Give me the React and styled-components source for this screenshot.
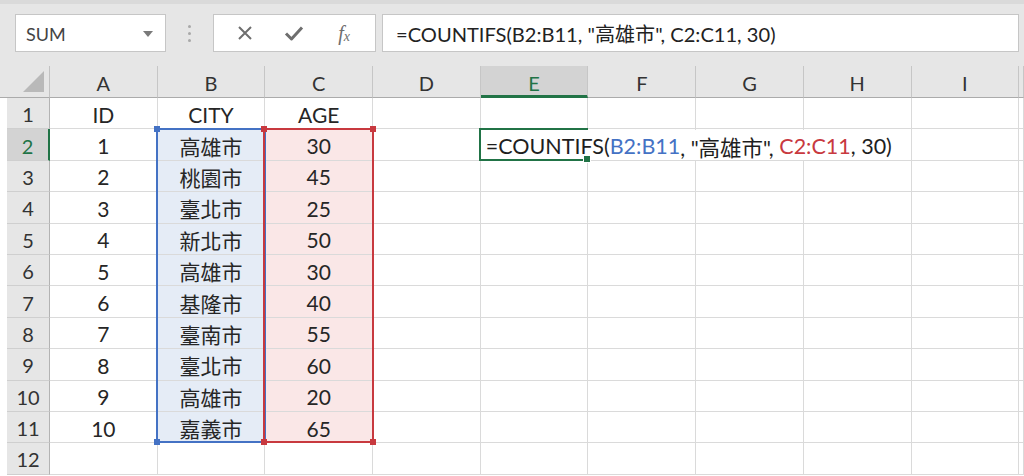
import React from "react";
import styled, { createGlobalStyle } from "styled-components";

const COLS = ["A", "B", "C", "D", "E", "F", "G", "H", "I"];
const ROW_COUNT = 12;

const data = [
  ["ID", "CITY", "AGE"],
  ["1", "高雄市", "30"],
  ["2", "桃園市", "45"],
  ["3", "臺北市", "25"],
  ["4", "新北市", "50"],
  ["5", "高雄市", "30"],
  ["6", "基隆市", "40"],
  ["7", "臺南市", "55"],
  ["8", "臺北市", "60"],
  ["9", "高雄市", "20"],
  ["10", "嘉義市", "65"],
];

const BLUE = "#4472c4";
const RED = "#c8393f";
const GREEN = "#217346";

function App() {
  const cells = [];
  for (let r = 1; r <= ROW_COUNT; r++) {
    for (let c = 0; c < COLS.length; c++) {
      const value = data[r - 1] && data[r - 1][c];
      let tint = null;
      if (r >= 2 && r <= 11 && c === 1) tint = "#e5ecf6";
      if (r >= 2 && r <= 11 && c === 2) tint = "#fae7e7";
      cells.push(
        <Cell key={r + "-" + c} $r={r + 1} $c={c + 2} $tint={tint}>
          {value}
        </Cell>
      );
    }
  }

  return (
    <Page>
      <GlobalStyle />
      <Toolbar>
        <NameBox>
          <span>SUM</span>
          <svg width="10" height="6" viewBox="0 0 10 6">
            <path d="M0 0 L10 0 L5 6 Z" fill="#7a7a7a" />
          </svg>
        </NameBox>
        <Grip>
          <i />
          <i />
          <i />
        </Grip>
        <FxBox>
          <FxButton>
            <svg width="16" height="16" viewBox="0 0 16 16">
              <path d="M2 2 L14 14 M14 2 L2 14" stroke="#6e6e6e" strokeWidth="2" fill="none" />
            </svg>
          </FxButton>
          <FxButton>
            <svg width="20" height="16" viewBox="0 0 20 16">
              <path d="M2 8.5 L7.5 14 L18 2.5" stroke="#6e6e6e" strokeWidth="3" fill="none" strokeLinejoin="round" />
            </svg>
          </FxButton>
          <FxButton>
            <FxGlyph>
              f<sub>x</sub>
            </FxGlyph>
          </FxButton>
        </FxBox>
        <Formula>=COUNTIFS(B2:B11, "高雄市", C2:C11, 30)</Formula>
      </Toolbar>

      <Sheet>
        <Corner>
          <svg width="21" height="21" viewBox="0 0 21 21">
            <path d="M21 0 L21 21 L0 21 Z" fill="#b9b9b9" />
          </svg>
        </Corner>
        {COLS.map((c, i) => (
          <ColHead key={c} $c={i + 2} $active={c === "E"}>
            {c}
          </ColHead>
        ))}
        <ColHead $c={11} />
        {Array.from({ length: ROW_COUNT }, (_, i) => (
          <RowHead key={i} $r={i + 2} $active={i === 1}>
            {i + 1}
          </RowHead>
        ))}
        {cells}
        {Array.from({ length: ROW_COUNT }, (_, i) => (
          <Cell key={"pad" + i} $r={i + 2} $c={11} />
        ))}

        <RangeBox $color={BLUE} $c={3}>
          <Handle $color={BLUE} $top $left />
          <Handle $color={BLUE} $left />
        </RangeBox>
        <RangeBox $color={RED} $c={4}>
          <Handle $color={RED} $top $left />
          <Handle $color={RED} $top />
          <Handle $color={RED} $left />
          <Handle $color={RED} />
        </RangeBox>

        <EditBox>
          =COUNTIFS(<Ref $color={BLUE}>B2:B11</Ref>, "高雄市", <Ref $color={RED}>C2:C11</Ref>, 30)
        </EditBox>
        <ActiveCell />
      </Sheet>
    </Page>
  );
}

const GlobalStyle = createGlobalStyle`
  html, body {
    margin: 0;
    padding: 0;
    background: #ffffff;
    overflow: hidden;
  }
  body {
    font-family: "Lato", "Noto Sans CJK TC", sans-serif;
  }
`;

const Page = styled.div`
  width: 1024px;
  height: 476px;
  overflow: hidden;
  background: #ffffff;
`;

const Toolbar = styled.div`
  height: 66px;
  box-sizing: border-box;
  border-top: 4px solid #dadada;
  background: #e6e6e6;
  padding: 10px 5px 0 15px;
  display: flex;
  align-items: flex-start;
  font-family: "Lato", "Noto Sans CJK TC", sans-serif;
`;

const NameBox = styled.div`
  width: 151px;
  height: 38px;
  box-sizing: border-box;
  background: #ffffff;
  border: 1px solid #c6c6c6;
  display: flex;
  align-items: center;
  justify-content: space-between;
  padding: 1px 12px 0 10px;
  font-size: 18px;
  color: #444444;
`;

const Grip = styled.div`
  width: 47px;
  height: 38px;
  display: flex;
  flex-direction: column;
  align-items: center;
  justify-content: center;
  gap: 4px;

  i {
    width: 3px;
    height: 3px;
    border-radius: 50%;
    background: #a9a9a9;
  }
`;

const FxBox = styled.div`
  width: 163px;
  height: 38px;
  box-sizing: border-box;
  background: #ffffff;
  border: 1px solid #c6c6c6;
  display: flex;
  align-items: center;
  justify-content: space-around;
  padding: 0 6px;
`;

const FxButton = styled.div`
  width: 40px;
  display: flex;
  align-items: center;
  justify-content: center;
`;

const FxGlyph = styled.span`
  font-family: "Liberation Serif", serif;
  font-style: italic;
  font-size: 20px;
  color: #6e6e6e;

  sub {
    font-size: 14px;
    vertical-align: -1px;
  }
`;

const Formula = styled.div`
  flex: 1;
  height: 38px;
  margin-left: 6px;
  box-sizing: border-box;
  background: #ffffff;
  border: 1px solid #c6c6c6;
  display: flex;
  align-items: center;
  padding: 1px 0 0 13px;
  font-size: 20.1px;
  color: #222222;
  white-space: nowrap;
`;

const Sheet = styled.div`
  display: grid;
  grid-template-columns: 50px repeat(9, 107.7px) 1fr;
  grid-template-rows: 32px repeat(12, 31.4px);
  font-family: "Lato", "Noto Sans CJK TC", sans-serif;
  color: #262626;
`;

const Corner = styled.div`
  grid-row: 1;
  grid-column: 1;
  background: #e6e6e6;
  border-bottom: 1px solid #ababab;
  border-right: 1px solid #c2c2c2;
  display: flex;
  align-items: flex-end;
  justify-content: flex-end;
  padding: 0 5px 5px 0;
`;

const ColHead = styled.div`
  grid-row: 1;
  grid-column: ${(p) => p.$c};
  background: ${(p) => (p.$active ? "#d3d3d3" : "#e6e6e6")};
  border-right: 1px solid #c6c6c6;
  border-bottom: ${(p) => (p.$active ? `3px solid ${GREEN}` : "1px solid #ababab")};
  display: flex;
  align-items: center;
  justify-content: center;
  padding-top: ${(p) => (p.$active ? "5px" : "3px")};
  font-size: 20px;
  color: ${(p) => (p.$active ? GREEN : "#333333")};
`;

const RowHead = styled.div`
  grid-row: ${(p) => p.$r};
  grid-column: 1;
  margin-left: 7px;
  background: ${(p) => (p.$active ? "#d3d3d3" : "#e6e6e6")};
  border-right: ${(p) => (p.$active ? `2px solid ${GREEN}` : "1px solid #b3b3b3")};
  border-bottom: 1px solid #cfcfcf;
  display: flex;
  align-items: center;
  justify-content: center;
  padding-top: 2px;
  font-size: 20px;
  color: ${(p) => (p.$active ? GREEN : "#333333")};
`;

const Cell = styled.div`
  grid-row: ${(p) => p.$r};
  grid-column: ${(p) => p.$c};
  background: ${(p) => p.$tint || "#ffffff"};
  border-right: 1px solid #dadada;
  border-bottom: 1px solid #dadada;
  display: flex;
  align-items: center;
  justify-content: center;
  padding-top: 2px;
  font-size: 21px;
  white-space: nowrap;
`;

const RangeBox = styled.div`
  grid-row: 3 / 13;
  grid-column: ${(p) => p.$c};
  position: relative;
  z-index: 2;
  margin: -1px -1px 0 -2px;
  border: 2px solid ${(p) => p.$color};
  pointer-events: none;
`;

const Handle = styled.span`
  position: absolute;
  width: 6px;
  height: 6px;
  background: ${(p) => p.$color};
  ${(p) => (p.$top ? "top: -4px;" : "bottom: -4px;")}
  ${(p) => (p.$left ? "left: -4px;" : "right: -4px;")}
`;

const EditBox = styled.div`
  grid-row: 3;
  grid-column: 6 / 11;
  justify-self: start;
  z-index: 3;
  margin: 1px 0 1px 1px;
  padding: 2px 8px 0 4px;
  background: #ffffff;
  display: flex;
  align-items: center;
  font-size: 21.5px;
  color: #1e1e1e;
  white-space: pre;
`;

const Ref = styled.span`
  color: ${(p) => p.$color};
`;

const ActiveCell = styled.div`
  grid-row: 3;
  grid-column: 6;
  position: relative;
  z-index: 4;
  margin: -1px 0 0 -2px;
  border: 2px solid ${GREEN};
  border-right: none;
  pointer-events: none;

  &::after {
    content: "";
    position: absolute;
    right: -3px;
    bottom: -4px;
    width: 6px;
    height: 6px;
    background: ${GREEN};
    border: 1px solid #ffffff;
  }
`;

export default App;
